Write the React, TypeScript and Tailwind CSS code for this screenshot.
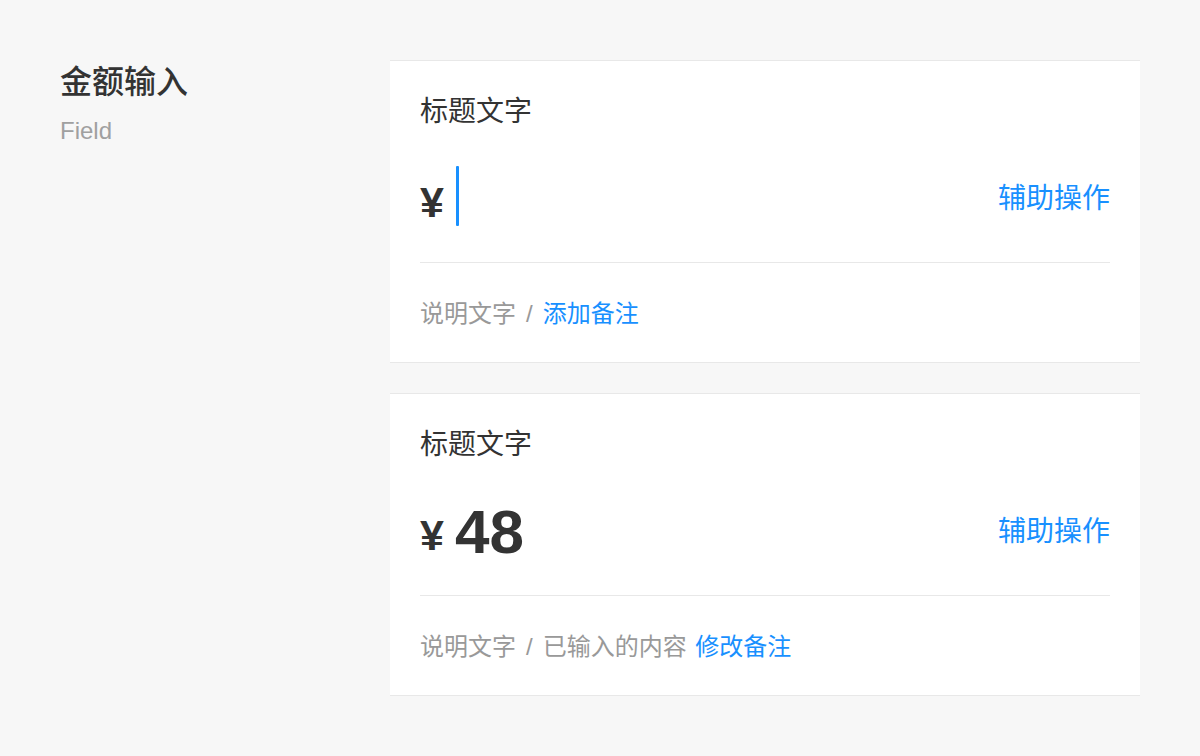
import React from "react";

const font = { fontFamily: '"Liberation Sans", "Noto Sans CJK SC", sans-serif' };

function Slash() {
  return <span className="mx-[10px]">/</span>;
}

function Card({ value, note }: { value?: string; note: React.ReactNode }) {
  return (
    <div className="bg-white border-y border-[#e8e8e8] px-[30px]">
      <div className="pt-[34px] text-[28px] leading-[34px] text-[#333]">标题文字</div>
      <div className="mt-[37px] pb-[36px] border-b border-[#e8e8e8]">
        <div className="h-[60px] flex items-center">
          <span className="text-[43px] font-bold text-[#333] leading-none mt-[12px]">¥</span>
          {value ? (
            <span className="ml-[11px] text-[62px] font-bold text-[#333] leading-none mt-[5px]">{value}</span>
          ) : (
            <span className="ml-[12px] w-[3px] h-[60px] bg-[#1890ff] rounded-[1px]" />
          )}
          <span className="ml-auto mt-[5px] text-[28px] leading-[34px] text-[#1890ff]">辅助操作</span>
        </div>
      </div>
      <div className="pt-[34px] pb-[31px] text-[24px] leading-[34px] text-[#999]">{note}</div>
    </div>
  );
}

export default function App() {
  return (
    <div className="w-[1200px] h-[756px] bg-[#f7f7f7] flex pt-[60px]" style={font}>
      <div className="w-[390px] shrink-0 pl-[60px] pt-[4px]">
        <div className="text-[32px] leading-[36px] font-medium text-[#333]">金额输入</div>
        <div className="mt-[17px] text-[24px] leading-[28px] text-[#a0a0a0]">Field</div>
      </div>
      <div className="w-[750px] flex flex-col gap-[30px]">
        <Card
          note={
            <>
              说明文字<Slash /><span className="text-[#1890ff]">添加备注</span>
            </>
          }
        />
        <Card
          value="48"
          note={
            <>
              说明文字<Slash />已输入的内容 <span className="ml-[2px] text-[#1890ff]">修改备注</span>
            </>
          }
        />
      </div>
    </div>
  );
}
